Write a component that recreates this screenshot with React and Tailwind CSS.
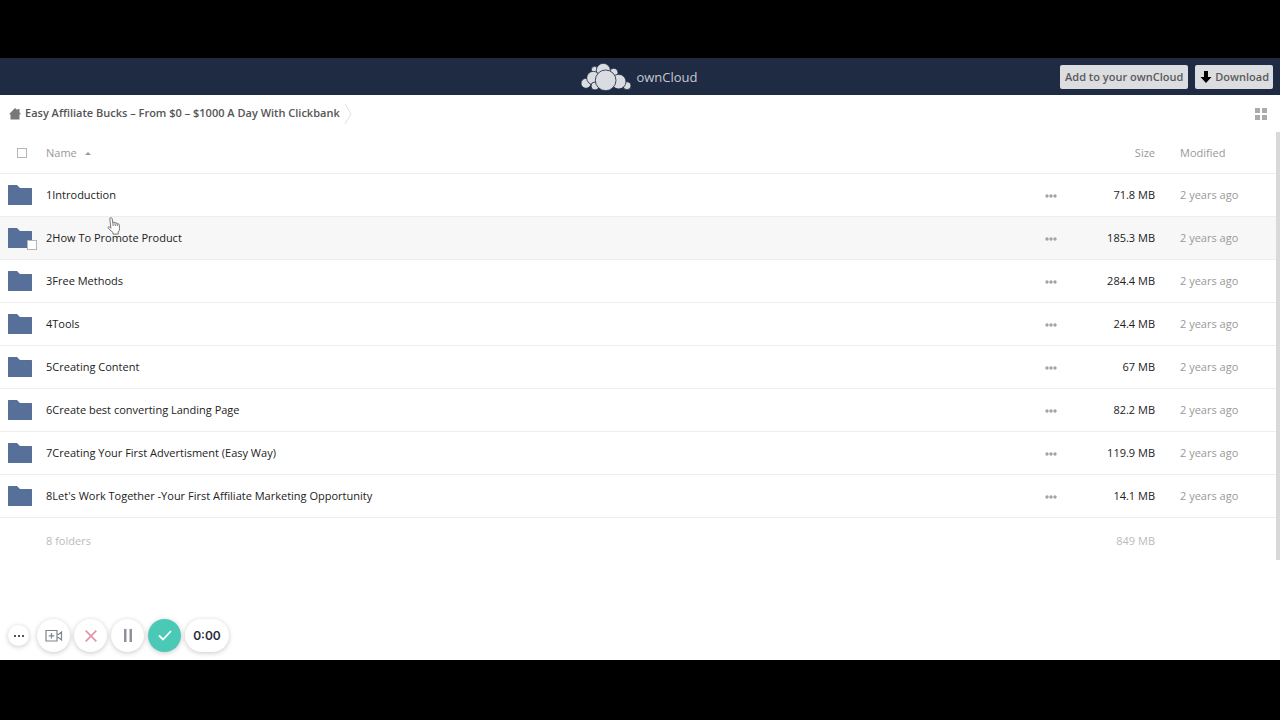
import React, { useState } from "react";

const folders = [
  { name: "1Introduction", size: "71.8 MB" },
  { name: "2How To Promote Product", size: "185.3 MB" },
  { name: "3Free Methods", size: "284.4 MB" },
  { name: "4Tools", size: "24.4 MB" },
  { name: "5Creating Content", size: "67 MB" },
  { name: "6Create best converting Landing Page", size: "82.2 MB" },
  { name: "7Creating Your First Advertisment (Easy Way)", size: "119.9 MB" },
  {
    name: "8Let's Work Together -Your First Affiliate Marketing Opportunity",
    size: "14.1 MB",
  },
];

function CloudLogo() {
  return (
    <svg viewBox="0 0 150 84" className="w-[50px] h-7" aria-hidden="true">
      <g fill="#d9dce0" stroke="#1f2b42" strokeWidth="2.5">
        <circle cx="41" cy="20" r="10" />
        <circle cx="98" cy="29" r="13" />
        <circle cx="67" cy="22" r="21" />
        <circle cx="15" cy="61" r="15" />
        <circle cx="37" cy="45" r="20" />
        <circle cx="138" cy="68" r="12" />
        <circle cx="113" cy="56" r="22" />
        <circle cx="42" cy="69" r="12" />
        <circle cx="74" cy="52" r="31" />
      </g>
    </svg>
  );
}

function FolderIcon() {
  return (
    <svg viewBox="0 0 24 20" className="block w-6 h-5" aria-hidden="true">
      <path d="M0 0.5Q0 0 .5 0H9l3 3h11.500Q24 3 24 3.500V20H0z" fill="#56709a" />
    </svg>
  );
}

function Dots({ className }) {
  return (
    <svg viewBox="0 0 12 4" className={className} fill="currentColor">
      <circle cx="2" cy="2" r="1.7" />
      <circle cx="6" cy="2" r="1.7" />
      <circle cx="10" cy="2" r="1.7" />
    </svg>
  );
}

function Header() {
  return (
    <header className="grid grid-cols-[1fr_auto_1fr] items-center h-[37px] pr-[7px] bg-[#1f2b42]">
      <a
        href="#home"
        className="col-start-2 flex items-center gap-[5px] pl-[6px] text-[13px] leading-4 text-[#c3c9d3]"
      >
        <CloudLogo />
        ownCloud
      </a>
      <div className="flex justify-end gap-[7px] text-[11px] font-semibold text-[#5a5a5a]">
        <button className="h-6 px-[5px] pt-px rounded-xs bg-[#dcdde0] whitespace-nowrap">
          Add to your ownCloud
        </button>
        <button className="flex items-center gap-[3px] h-6 pl-[5px] pr-1 pt-px rounded-xs bg-[#dcdde0]">
          <svg viewBox="0 0 12 12" className="w-3 h-3" aria-hidden="true">
            <path d="M4 0h4v6h3.500L6 12 .5 6H4z" fill="#000" />
          </svg>
          Download
        </button>
      </div>
    </header>
  );
}

function Breadcrumb() {
  return (
    <nav className="flex items-center justify-between h-[37px] pl-[9px] pr-[13px]">
      <div className="flex items-center">
        <a
          href="#folder"
          className="flex items-center gap-1 text-[11px] font-semibold text-[#555]"
        >
          <svg viewBox="0 0 12 12" className="w-3 h-3" aria-hidden="true">
            <path
              d="M6 0l2.500 2.300V1h2v3.200L12 6.200h-1.500V11.500H1.500V6.200H0z"
              fill="#777"
            />
          </svg>
          Easy Affiliate Bucks – From $0 – $1000 A Day With Clickbank
        </a>
        <svg
          viewBox="0 0 8 22"
          className="ml-1 w-2 h-[22px]"
          fill="none"
          stroke="#e2e2e2"
          aria-hidden="true"
        >
          <path d="M1 1l6 10-6 10" />
        </svg>
      </div>
      <button aria-label="Toggle grid view" className="text-[#ababab]">
        <svg viewBox="0 0 12 12" className="block w-3 h-3" fill="currentColor">
          <path d="M0 0h5v5H0zM7 0h5v5H7zM0 7h5v5H0zM7 7h5v5H7z" />
        </svg>
      </button>
    </nav>
  );
}

function FileTable() {
  const [selected, setSelected] = useState([]);
  const hovered = 1;

  function toggle(i) {
    setSelected((s) => (s.includes(i) ? s.filter((x) => x !== i) : [...s, i]));
  }

  return (
    <table className="flex-1 table-fixed border-collapse text-[11px] leading-4 text-[#222]">
      <thead>
        <tr className="h-[41px] border-b border-[#eee] text-[#999]">
          <th className="w-[46px] pl-[17px] pt-[2px]">
            <input
              type="checkbox"
              aria-label="Select all"
              checked={selected.length === folders.length}
              onChange={(e) =>
                setSelected(e.target.checked ? folders.map((_, i) => i) : [])
              }
              className="block appearance-none w-[10px] h-[10px] border border-[#b5b5b5] bg-white checked:bg-[#56709a]"
            />
          </th>
          <th className="pt-[2px] text-left font-normal">
            <button className="flex items-center gap-2">
              Name
              <svg viewBox="0 0 6 3" className="w-[6px] h-[3px]">
                <path d="M0 3l3-3 3 3z" fill="#999" />
              </svg>
            </button>
          </th>
          <th className="w-[26px]"></th>
          <th className="w-[84px] pt-[2px] text-right font-normal">
            <button>Size</button>
          </th>
          <th className="w-[121px] pl-[25px] pt-[2px] text-left font-normal">
            <button>Modified</button>
          </th>
        </tr>
      </thead>
      <tbody>
        {folders.map((f, i) => (
          <tr
            key={f.name}
            className={
              "group h-[43px] border-b border-[#eee] hover:bg-[#f7f7f7] " +
              (i === hovered ? "bg-[#f7f7f7]" : "")
            }
          >
            <td className="pl-2">
              <div className="relative w-6">
                <FolderIcon />
                <input
                  type="checkbox"
                  aria-label={"Select " + f.name}
                  checked={selected.includes(i)}
                  onChange={() => toggle(i)}
                  className={
                    "absolute -right-[5px] -bottom-[2px] appearance-none w-[10px] h-[10px] border border-[#b5b5b5] bg-white checked:bg-[#56709a] group-hover:opacity-100 " +
                    (i === hovered ? "" : "opacity-0")
                  }
                />
              </div>
            </td>
            <td>
              <a href="#folder">{f.name}</a>
            </td>
            <td>
              <button
                aria-label="Actions"
                className="block pt-[2px] text-[#a3a3a3]"
              >
                <Dots className="block w-3 h-1" />
              </button>
            </td>
            <td className="text-right">{f.size}</td>
            <td className="pl-[25px] text-[#999]">2 years ago</td>
          </tr>
        ))}
      </tbody>
      <tfoot>
        <tr className="h-[43px] text-[#bbb]">
          <td></td>
          <td className="pt-1">8 folders</td>
          <td></td>
          <td className="pt-1 text-right">849 MB</td>
          <td></td>
        </tr>
      </tfoot>
    </table>
  );
}

function RecorderBar() {
  const round =
    "flex items-center justify-center w-[33px] h-[33px] rounded-full shadow-[0_1px_5px_rgba(0,0,0,0.22)]";

  return (
    <div className="flex items-center gap-1 mt-auto pl-2 pb-2">
      <button
        aria-label="More"
        className="flex items-center justify-center w-[21px] h-[21px] mr-1 rounded-full bg-white text-[#555] shadow-[0_1px_5px_rgba(0,0,0,0.22)]"
      >
        <svg viewBox="0 0 10 2" className="w-[10px] h-[2px]" fill="currentColor">
          <path d="M0 0h2v2H0zM4 0h2v2H4zM8 0h2v2H8z" />
        </svg>
      </button>
      <button aria-label="Add camera" className={round + " bg-white"}>
        <svg
          viewBox="0 0 18 14"
          className="w-[18px] h-[14px]"
          fill="none"
          stroke="#7d858c"
          strokeWidth="1.2"
        >
          <path d="M1 1.500h11v10.500H1zM12 5.500h1.500L16.500 3v8l-3-2.500H12M6.500 4v5.500M3.700 6.800h5.600" />
        </svg>
      </button>
      <button aria-label="Cancel" className={round + " bg-white"}>
        <svg
          viewBox="0 0 12 12"
          className="w-3 h-3"
          stroke="#e594a8"
          strokeWidth="1.7"
        >
          <path d="M.7.7l10.600 10.600M11.300.7L.7 11.300" />
        </svg>
      </button>
      <button aria-label="Pause" className={round + " bg-white"}>
        <svg viewBox="0 0 10 13" className="w-[10px] h-[13px]" fill="#8d9298">
          <path d="M1 0h2.500v13H1zM6.500 0H9v13H6.500z" />
        </svg>
      </button>
      <button aria-label="Finish" className={round + " bg-[#4ac9b6]"}>
        <svg
          viewBox="0 0 14 11"
          className="w-[14px] h-[11px]"
          fill="none"
          stroke="#fff"
          strokeWidth="1.8"
        >
          <path d="M1 5.500l4 4L13 1" />
        </svg>
      </button>
      <div className="flex items-center justify-center w-11 h-[33px] rounded-full bg-white font-['Inter',sans-serif] text-[12px] font-semibold text-[#2b2b3c] shadow-[0_1px_5px_rgba(0,0,0,0.22)]">
        0:00
      </div>
    </div>
  );
}

function HandCursor() {
  return (
    <svg
      viewBox="0 0 14 18"
      className="absolute left-[107px] top-[217px] w-[14px] h-[18px] pointer-events-none"
      fill="#fff"
      stroke="#777"
      aria-hidden="true"
    >
      <path d="M2.800 1.800q0-1.200 1-1.200t1.300 1L5.900 6q.2-1 1.100-.9t1.100 1.200q.2-.8 1-.6t1.100 1.300q.3-.6 1-.4t1.100 1.500l.2 3.500q0 2.200-1.300 3.500v2H6v-1.600L1.500 11.500q-.7-1.500.1-1.800t2.300 1.600z" />
      <path d="M5.900 6l.3 3M8.100 6.500l.2 2.500M10.200 7l.1 2" fill="none" />
    </svg>
  );
}

export default function App() {
  return (
    <div className="relative flex flex-col min-h-screen pt-[58px] pb-[60px] bg-black font-['Open_Sans',sans-serif]">
      <Header />
      <main className="flex flex-col flex-1 bg-white">
        <Breadcrumb />
        <div className="flex">
          <FileTable />
          <div className="w-1 bg-[#d9d9d9]"></div>
        </div>
        <RecorderBar />
      </main>
      <HandCursor />
    </div>
  );
}
